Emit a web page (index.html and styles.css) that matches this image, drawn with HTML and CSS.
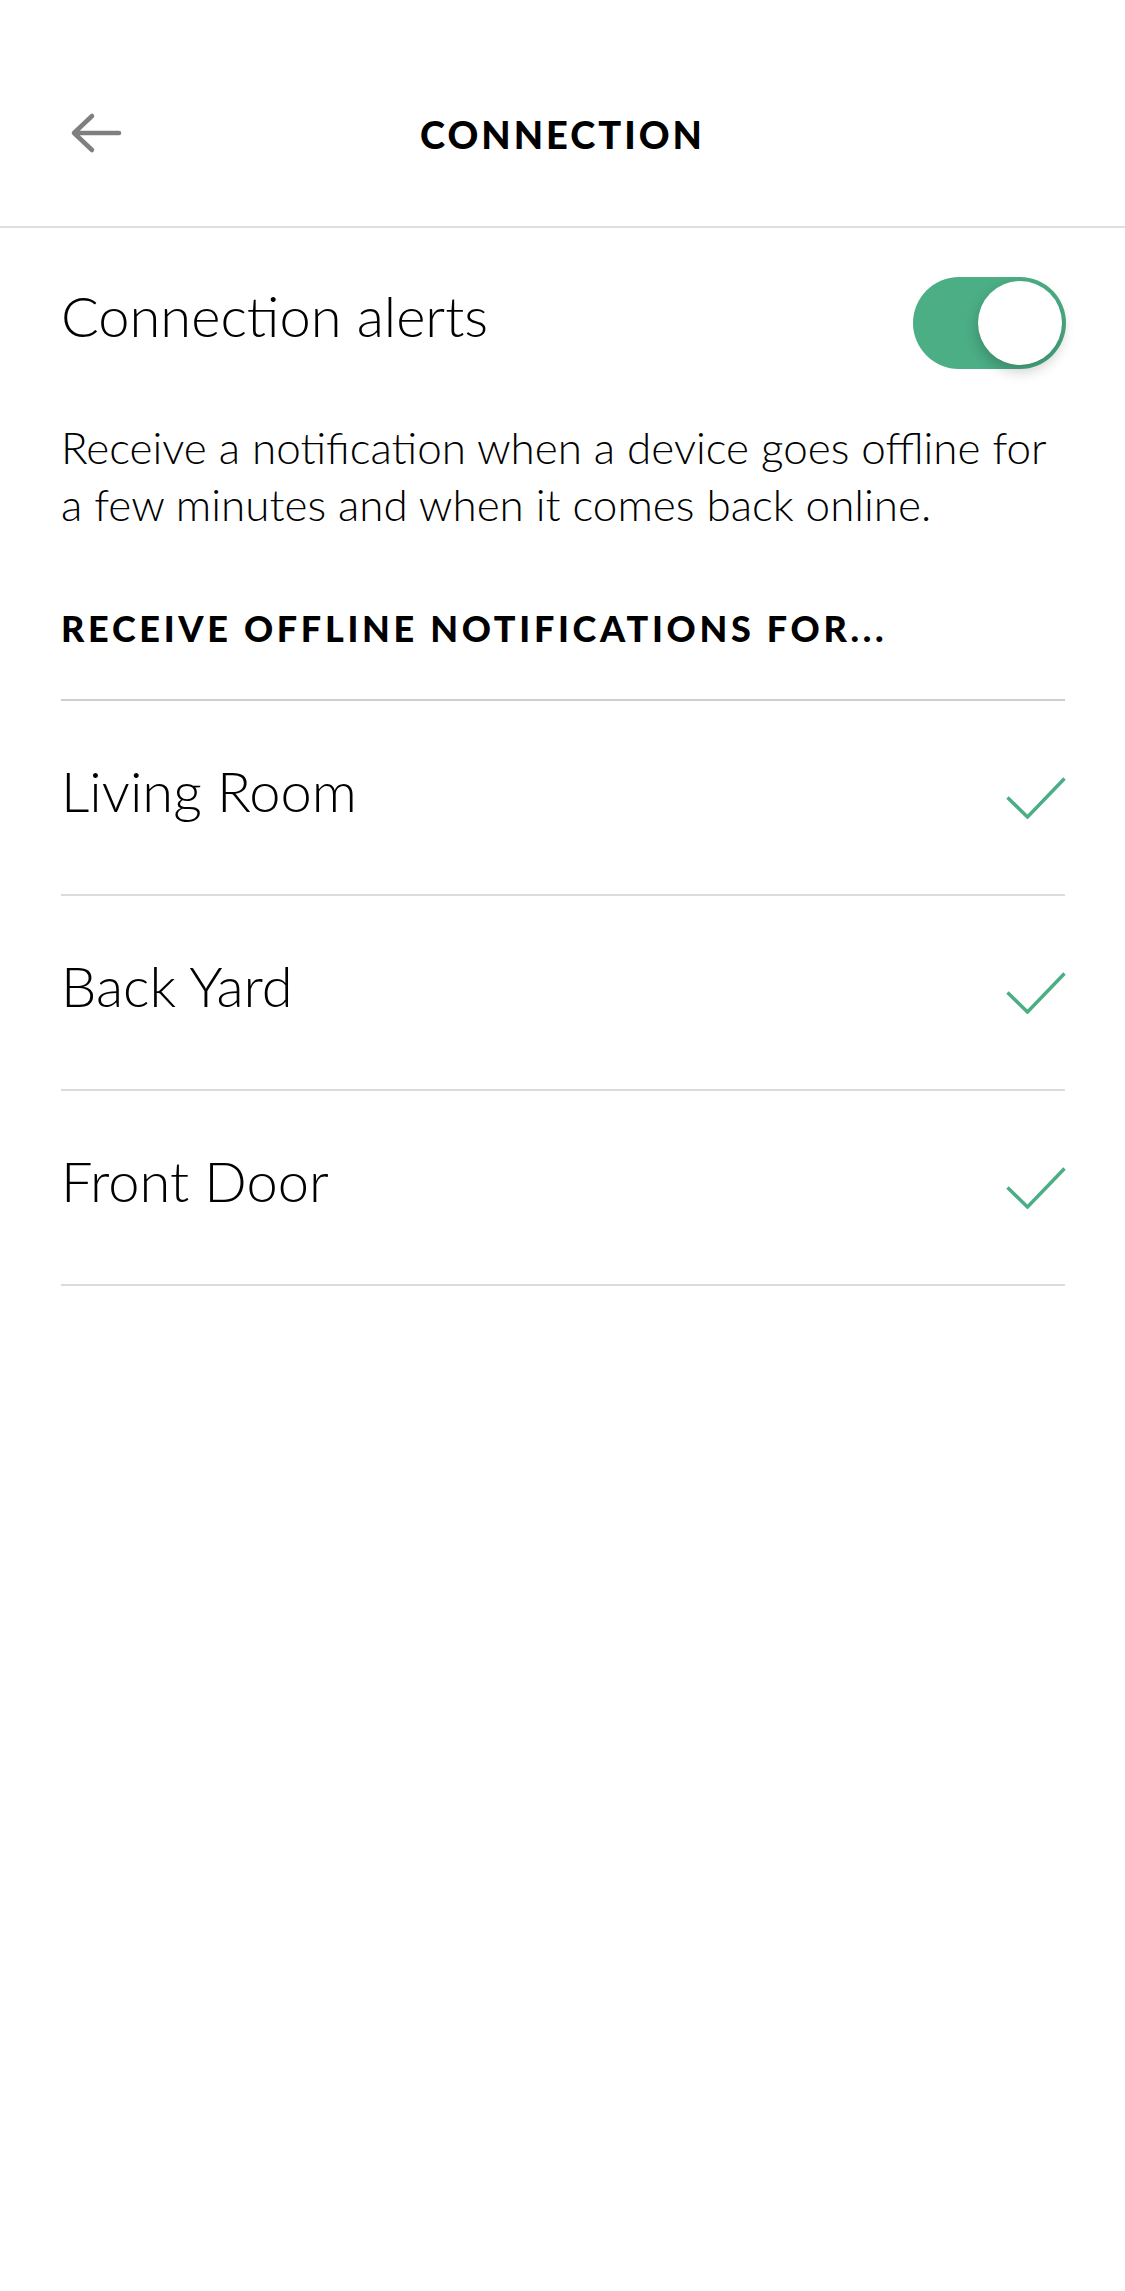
FILE: index.html
```html
<!DOCTYPE html>
<html>
<head lang="en">
    <meta charset="UTF-8">
    <title>Connection</title>
    <link rel="stylesheet" href="styles.css">
</head>
<body>
<div id="page">
    <div class="header">
        <span class="back">
            <svg width="52" height="44" viewBox="0 0 52 44">
                <path d="M4 21H49M4 21L22 4M4 21L22 38" fill="none" stroke="#7f7f7f" stroke-width="4.5" stroke-linecap="round" stroke-linejoin="round"/>
            </svg>
        </span>
        <h1 class="title">CONNECTION</h1>
    </div>
    <div class="content">
        <div class="alert-row">
            <span class="alert-label">Connection alerts</span>
            <span class="toggle"><span class="knob"></span></span>
        </div>
        <p class="desc">Receive a notification when a device goes offline for a few minutes and when it comes back online.</p>
        <h2 class="section">RECEIVE OFFLINE NOTIFICATIONS FOR...</h2>
        <ul class="list">
            <li><span class="name">Living Room</span>
                <svg class="check" width="60" height="42" viewBox="0 0 60 42"><path d="M1.5 20.5L21.5 40L58.5 1.5" fill="none" stroke="#4bae85" stroke-width="3.5"/></svg>
            </li>
            <li><span class="name">Back Yard</span>
                <svg class="check" width="60" height="42" viewBox="0 0 60 42"><path d="M1.5 20.5L21.5 40L58.5 1.5" fill="none" stroke="#4bae85" stroke-width="3.5"/></svg>
            </li>
            <li><span class="name">Front Door</span>
                <svg class="check" width="60" height="42" viewBox="0 0 60 42"><path d="M1.5 20.5L21.5 40L58.5 1.5" fill="none" stroke="#4bae85" stroke-width="3.5"/></svg>
            </li>
        </ul>
    </div>
</div>
</body>
</html>
```

FILE: styles.css
```css
*{
    margin: 0;
    padding: 0;
    box-sizing: border-box;
}
ul{
    list-style: none;
}
body{
    background: #fff;
    font-family: "Lato", "Liberation Sans", sans-serif;
    color: #000;
}
#page{
    width: 1125px;
    min-height: 2291px;
}
.header{
    height: 228px;
    padding-top: 42px;
    border-bottom: 2px solid #dedede;
    display: flex;
    align-items: center;
}
.back{
    width: 52px;
    height: 44px;
    margin-left: 70px;
    display: flex;
}
.title{
    flex: 1;
    text-align: center;
    margin-right: 122px;
    font-size: 38px;
    font-weight: 900;
    letter-spacing: 3px;
}
.content{
    padding: 0 60px 0 61px;
}
.alert-row{
    height: 190px;
    display: flex;
    align-items: center;
    justify-content: space-between;
}
.alert-label{
    font-size: 56px;
    font-weight: 300;
    margin-bottom: 16px;
}
.toggle{
    width: 153px;
    height: 92px;
    border-radius: 46px;
    background: #4bae85;
    display: flex;
    align-items: center;
    justify-content: flex-end;
    padding-right: 4px;
    margin-right: -1px;
}
.knob{
    width: 84px;
    height: 84px;
    border-radius: 50%;
    background: #fff;
    box-shadow: 0 6px 14px rgba(0,0,0,0.22);
}
.desc{
    font-size: 44px;
    font-weight: 300;
    line-height: 57px;
    margin-top: 1px;
}
.section{
    font-size: 36px;
    font-weight: 900;
    letter-spacing: 3.7px;
    margin-top: 73px;
    padding-bottom: 49px;
    border-bottom: 2px solid #cfcfcf;
}
.list li{
    height: 195px;
    display: flex;
    align-items: center;
    justify-content: space-between;
    border-bottom: 2px solid #dcdcdc;
}
.name{
    font-size: 56px;
    font-weight: 300;
    margin-bottom: 14px;
}
.check{
    display: block;
    margin-right: -1px;
}
```
